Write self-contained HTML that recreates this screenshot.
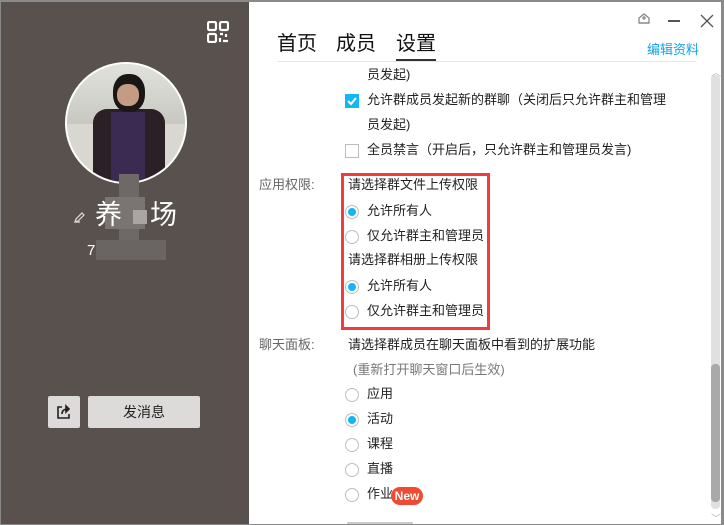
<!DOCTYPE html>
<html><head><meta charset="utf-8"><style>
*{margin:0;padding:0;box-sizing:border-box}
body{width:724px;height:524px;overflow:hidden;background:#8a8a8a;position:relative;font-family:"Liberation Sans","Noto Sans CJK SC",sans-serif;font-size:13px;color:#222}
.a{position:absolute;white-space:nowrap}
#left{position:absolute;left:1px;top:2px;width:248px;height:522px;background:#59514e}
#right{position:absolute;left:249px;top:2px;width:472px;height:522px;background:#fff}
.t{position:absolute;line-height:18px;white-space:nowrap}
.rad{position:absolute;width:14px;height:14px;border:1px solid #bdbdbd;border-radius:50%;background:#fff}
.rad.on::after{content:"";position:absolute;left:2px;top:2px;width:8px;height:8px;border-radius:50%;background:#12b7f5}
.cb{position:absolute;width:14px;height:14px;border:1px solid #bdbdbd;background:#fff}
.lbl{color:#666}
</style></head><body>
<div id="left">
 <svg class="a" style="left:206px;top:19px" width="22" height="22" viewBox="0 0 22 22" fill="none" stroke="#fff" stroke-width="2.2">
  <rect x="1" y="1" width="8" height="8" rx="1.5"/><rect x="13" y="1" width="8" height="8" rx="1.5"/><rect x="1" y="13" width="8" height="8" rx="1.5"/>
  <path d="M13 13h3M19 13v3M13 17v4M16 20h5" />
 </svg>
 <div class="a" style="left:64px;top:60px;width:122px;height:122px;border-radius:50%;border:2px solid #fff;overflow:hidden;background:#d8d8d0">
  <div class="a" style="left:0;top:0;width:122px;height:60px;background:linear-gradient(#e2e2dc,#c8c8c2)"></div>
  <div class="a" style="left:26px;top:45px;width:72px;height:80px;background:#2a2026;border-radius:14px 14px 0 0"></div>
  <div class="a" style="left:44px;top:48px;width:34px;height:70px;background:#3b2b52"></div>
  <div class="a" style="left:46px;top:10px;width:32px;height:38px;background:#1a1616;border-radius:45%"></div>
  <div class="a" style="left:50px;top:20px;width:22px;height:22px;background:#c49b83;border-radius:45%"></div>
 </div>
 <div class="a" style="left:118px;top:172px;width:20px;height:70px;background:#6e6866"></div>
 <div class="a" style="left:104px;top:195px;width:40px;height:32px;background:#7a7472"></div>
 <div class="a" style="left:132px;top:208px;width:14px;height:14px;background:#aaa5a2"></div>
 <div class="a" style="left:95px;top:238px;width:70px;height:20px;background:#6a6462"></div>
 <svg class="a" style="left:72px;top:208px" width="14" height="14" viewBox="0 0 14 14" fill="none" stroke="#ddd" stroke-width="1.2"><path d="M2 12h5M2 12l1-3 6-6 2 2-6 6z"/></svg>
 <div class="a" style="left:94px;top:196px;font-size:27px;color:#fff;line-height:34px">养</div>
 <div class="a" style="left:149px;top:196px;font-size:27px;color:#fff;line-height:34px">场</div>
 <div class="a" style="left:86px;top:240px;font-size:15px;color:#fff">7</div>
 <div class="a" style="left:47px;top:394px;width:32px;height:32px;background:#dcdbd9;border-radius:2px"></div>
 <svg class="a" style="left:55px;top:402px" width="16" height="16" viewBox="0 0 16 16" fill="none" stroke="#222" stroke-width="1.6"><path d="M6 3H2v11h11v-4"/><path d="M6 10c0-4 3-5 6-5" /><path d="M10 2l3 3-3 3z" fill="#222"/></svg>
 <div class="a" style="left:87px;top:394px;width:112px;height:32px;background:#dcdbd9;border-radius:2px;text-align:center;line-height:32px;font-size:14px;color:#222">发消息</div>
</div>
<div id="right">
 <svg class="a" style="left:388px;top:10px" width="14" height="14" viewBox="0 0 14 14" fill="none" stroke="#888" stroke-width="1.3"><path d="M2 6l5-4 5 4v5H2z"/><path d="M7 4v4M5 6h4"/><path d="M2 11h10"/></svg>
 <div class="a" style="left:419px;top:18px;width:12px;height:1.5px;background:#555"></div>
 <svg class="a" style="left:451px;top:12px" width="14" height="14" viewBox="0 0 14 14" stroke="#555" stroke-width="1.3"><path d="M1 1l12 12M13 1L1 13"/></svg>
 <div class="a" style="left:28px;top:29px;font-size:20px;color:#111;line-height:26px">首页</div>
 <div class="a" style="left:87px;top:29px;font-size:20px;color:#111;line-height:26px">成员</div>
 <div class="a" style="left:147px;top:29px;font-size:20px;color:#111;line-height:26px">设置</div>
 <div class="a" style="left:147px;top:57px;width:40px;height:3px;background:#333"></div>
 <div class="a" style="left:28px;top:59px;width:419px;height:1px;background:#e6e6e6"></div>
 <div class="a" style="left:398px;top:37px;font-size:13px;color:#12a3e0">编辑资料</div>
 <div class="a" style="left:462px;top:73px;width:9px;height:434px;background:#e0e0e0;border-radius:4px"></div>
 <div class="a" style="left:462px;top:362px;width:9px;height:138px;background:#a9a9a9;border-radius:4px"></div>
 <div class="a" style="left:462px;top:62px;color:#bbb;font-size:10px">︿</div>
 <div class="a" style="left:462px;top:508px;color:#bbb;font-size:10px">﹀</div>

 <div class="t" style="left:118px;top:64px">员发起)</div>
 <div class="cb" style="left:96px;top:92px;background:#12b7f5;border-color:#12b7f5"></div>
 <svg class="a" style="left:97px;top:93px" width="12" height="12" viewBox="0 0 12 12" fill="none" stroke="#fff" stroke-width="2"><path d="M2 6l3 3 5-6"/></svg>
 <div class="t" style="left:118px;top:89px">允许群成员发起新的群聊（关闭后只允许群主和管理</div>
 <div class="t" style="left:118px;top:114px">员发起)</div>
 <div class="cb" style="left:96px;top:142px"></div>
 <div class="t" style="left:118px;top:139px">全员禁言（开启后，只允许群主和管理员发言)</div>

 <div class="t lbl" style="left:10px;top:174px">应用权限:</div>
 <div class="a" style="left:92px;top:171px;width:149px;height:157px;border:3px solid #f03c3c"></div>
 <div class="t" style="left:99px;top:174px">请选择群文件上传权限</div>
 <div class="rad on" style="left:96px;top:203px"></div><div class="t" style="left:118px;top:200px">允许所有人</div>
 <div class="rad" style="left:96px;top:228px"></div><div class="t" style="left:118px;top:225px">仅允许群主和管理员</div>
 <div class="t" style="left:99px;top:249px">请选择群相册上传权限</div>
 <div class="rad on" style="left:96px;top:278px"></div><div class="t" style="left:118px;top:275px">允许所有人</div>
 <div class="rad" style="left:96px;top:303px"></div><div class="t" style="left:118px;top:300px">仅允许群主和管理员</div>

 <div class="t lbl" style="left:10px;top:334px">聊天面板:</div>
 <div class="t" style="left:99px;top:334px">请选择群成员在聊天面板中看到的扩展功能</div>
 <div class="t" style="left:104px;top:359px;color:#777">(重新打开聊天窗口后生效)</div>
 <div class="rad" style="left:96px;top:386px"></div><div class="t" style="left:118px;top:383px">应用</div>
 <div class="rad on" style="left:96px;top:411px"></div><div class="t" style="left:118px;top:408px">活动</div>
 <div class="rad" style="left:96px;top:436px"></div><div class="t" style="left:118px;top:433px">课程</div>
 <div class="rad" style="left:96px;top:461px"></div><div class="t" style="left:118px;top:458px">直播</div>
 <div class="rad" style="left:96px;top:486px"></div><div class="t" style="left:118px;top:483px">作业</div>
 <div class="a" style="left:142px;top:485px;width:32px;height:18px;background:#f04b32;border-radius:9px;color:#fff;font-size:12px;font-weight:bold;text-align:center;line-height:18px">New</div>
 <div class="a" style="left:98px;top:520px;width:66px;height:2px;background:#ccc"></div>
</div>
</body></html>
